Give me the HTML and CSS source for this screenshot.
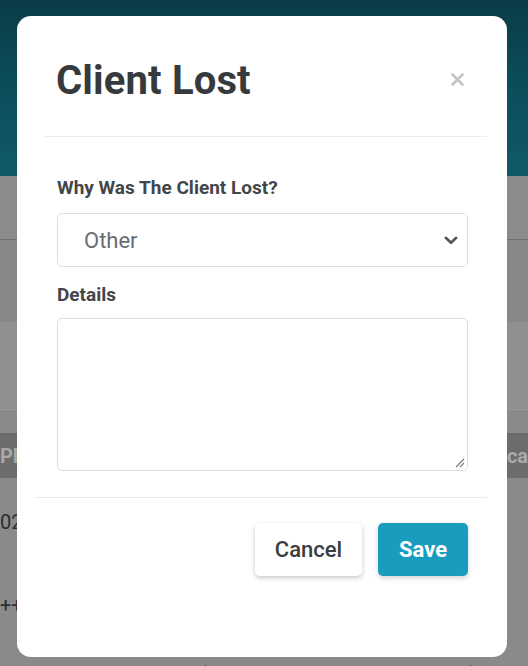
FILE: index.html
```html
<!DOCTYPE html>
<html>
<head>
<meta charset="utf-8">
<link rel="stylesheet" href="styles.css">
</head>
<body>
<div class="page">
  <div class="topbar"></div>
  <div class="toolbar"></div>
  <div class="filters"></div>
  <div class="spacer"></div>
  <div class="thead"><span class="th-left">Ph</span><span class="th-right">ca</span></div>
  <div class="row"><span class="cell-left">02</span></div>
  <div class="row row-2"><span class="cell-left">++</span></div>
  <div class="row last"><span class="mark"></span><span class="mark mark-2"></span></div>
</div>

<div class="modal" role="dialog">
  <div class="modal-header">
    <h1 class="modal-title">Client Lost</h1>
    <button class="close" aria-label="Close">
      <svg width="13" height="13" viewBox="0 0 13 13"><path d="M1.5 1.5 L11.5 11.5 M11.5 1.5 L1.5 11.5" stroke="#c4c4c4" stroke-width="2.6" stroke-linecap="round"/></svg>
    </button>
  </div>
  <div class="modal-body">
    <label class="label">Why Was The Client Lost?</label>
    <div class="select">
      <span class="select-value">Other</span>
      <svg class="chevron" width="14" height="9" viewBox="0 0 14 9"><path d="M1.8 1.8 L7 6.8 L12.2 1.8" fill="none" stroke="#555" stroke-width="2.6" stroke-linecap="round" stroke-linejoin="round"/></svg>
    </div>
    <label class="label label-details">Details</label>
    <div class="textarea">
      <svg class="grip" width="12" height="12" viewBox="0 0 12 12"><path d="M11 3 L3 11 M11 7 L7 11" stroke="#777" stroke-width="1.1"/></svg>
    </div>
  </div>
  <div class="modal-footer">
    <button class="btn btn-cancel">Cancel</button>
    <button class="btn btn-save">Save</button>
  </div>
</div>
</body>
</html>
```
FILE: styles.css
```css
* { box-sizing: border-box; }
html, body { margin: 0; padding: 0; }
body {
  width: 528px;
  height: 666px;
  overflow: hidden;
  position: relative;
  font-family: Roboto, "Liberation Sans", sans-serif;
  background: #8a8a8a;
}
.page {
  display: flex;
  flex-direction: column;
  height: 666px;
  overflow: hidden;
}
.topbar {
  height: 176px;
  background: linear-gradient(180deg, #0a3b47 0%, #0c4c5a 45%, #0f5a69 100%);
  flex: none;
}
.toolbar {
  height: 64px;
  background: #8b8b8b;
  border-bottom: 1px solid #6f6f6f;
  flex: none;
}
.filters {
  height: 82px;
  background: #878787;
  flex: none;
}
.spacer {
  height: 88px;
  background: #8f8f8f;
  border-bottom: 1px solid #9a9a9a;
  flex: none;
  margin-bottom: 23px;
}
.thead {
  height: 45px;
  background: #6c6c6c;
  display: flex;
  align-items: center;
  justify-content: space-between;
  color: #a9a9a9;
  font-weight: 700;
  font-size: 20px;
  flex: none;
}
.row {
  height: 88px;
  display: flex;
  align-items: center;
  font-size: 20px;
  color: #2e2e2e;
  flex: none;
  background: #8a8a8a;
}
.row-2 { height: 78px; }
.row.last {
  height: 30px;
  align-items: flex-end;
  padding-left: 205px;
}
.mark {
  width: 1px;
  height: 9px;
  border-left: 1px dotted #333;
}
.mark-2 { margin-left: 264px; }

.modal {
  position: absolute;
  left: 17px;
  top: 16px;
  width: 490px;
  height: 641px;
  background: #fff;
  border-radius: 14px;
  display: flex;
  flex-direction: column;
}
.modal-header {
  height: 121px;
  margin: 0 20px 0 28px;
  padding: 9px 23px 0 11px;
  display: flex;
  align-items: center;
  justify-content: space-between;
  border-bottom: 1px solid #e9eef0;
  flex: none;
}
.modal-title {
  margin: 0;
  font-size: 40px;
  font-weight: 700;
  color: #373a3c;
  letter-spacing: 0.15px;
}
.close {
  border: 0;
  background: none;
  padding: 0;
  display: flex;
  margin-top: -2px;
}
.modal-body {
  padding: 39px 39px 26px 40px;
  display: flex;
  flex-direction: column;
  flex: none;
}
.label {
  display: block;
  font-size: 19px;
  font-weight: 700;
  color: #434649;
  line-height: 24px;
  margin-bottom: 13px;
}
.label-details {
  margin-top: 16px;
  margin-bottom: 11px;
}
.select {
  height: 54px;
  border: 1px solid #dcdfe1;
  border-radius: 5px;
  display: flex;
  align-items: center;
  justify-content: space-between;
  padding: 0 9px 0 26px;
}
.select-value {
  font-size: 22px;
  color: #6a6d70;
}
.chevron { margin-top: 1px; }
.textarea {
  height: 153px;
  border: 1px solid #dcdfe1;
  border-radius: 5px;
  display: flex;
  align-items: flex-end;
  justify-content: flex-end;
  padding: 0 2px 2px 0;
}
.modal-footer {
  margin: 0 20px 0 17px;
  border-top: 1px solid #e5edf0;
  padding: 25px 19px 0 0;
  display: flex;
  justify-content: flex-end;
  gap: 16px;
}
.btn {
  height: 53px;
  border: 0;
  border-radius: 5px;
  font-family: Roboto, "Liberation Sans", sans-serif;
  font-size: 22px;
  cursor: pointer;
}
.btn-cancel {
  width: 107px;
  background: #fff;
  color: #3a3d40;
  font-weight: 500;
  box-shadow: 0 2px 5px rgba(0,0,0,0.22);
}
.btn-save {
  width: 90px;
  background: #199cbe;
  color: #fff;
  font-weight: 700;
  box-shadow: 0 2px 5px rgba(0,0,0,0.18);
}
```
